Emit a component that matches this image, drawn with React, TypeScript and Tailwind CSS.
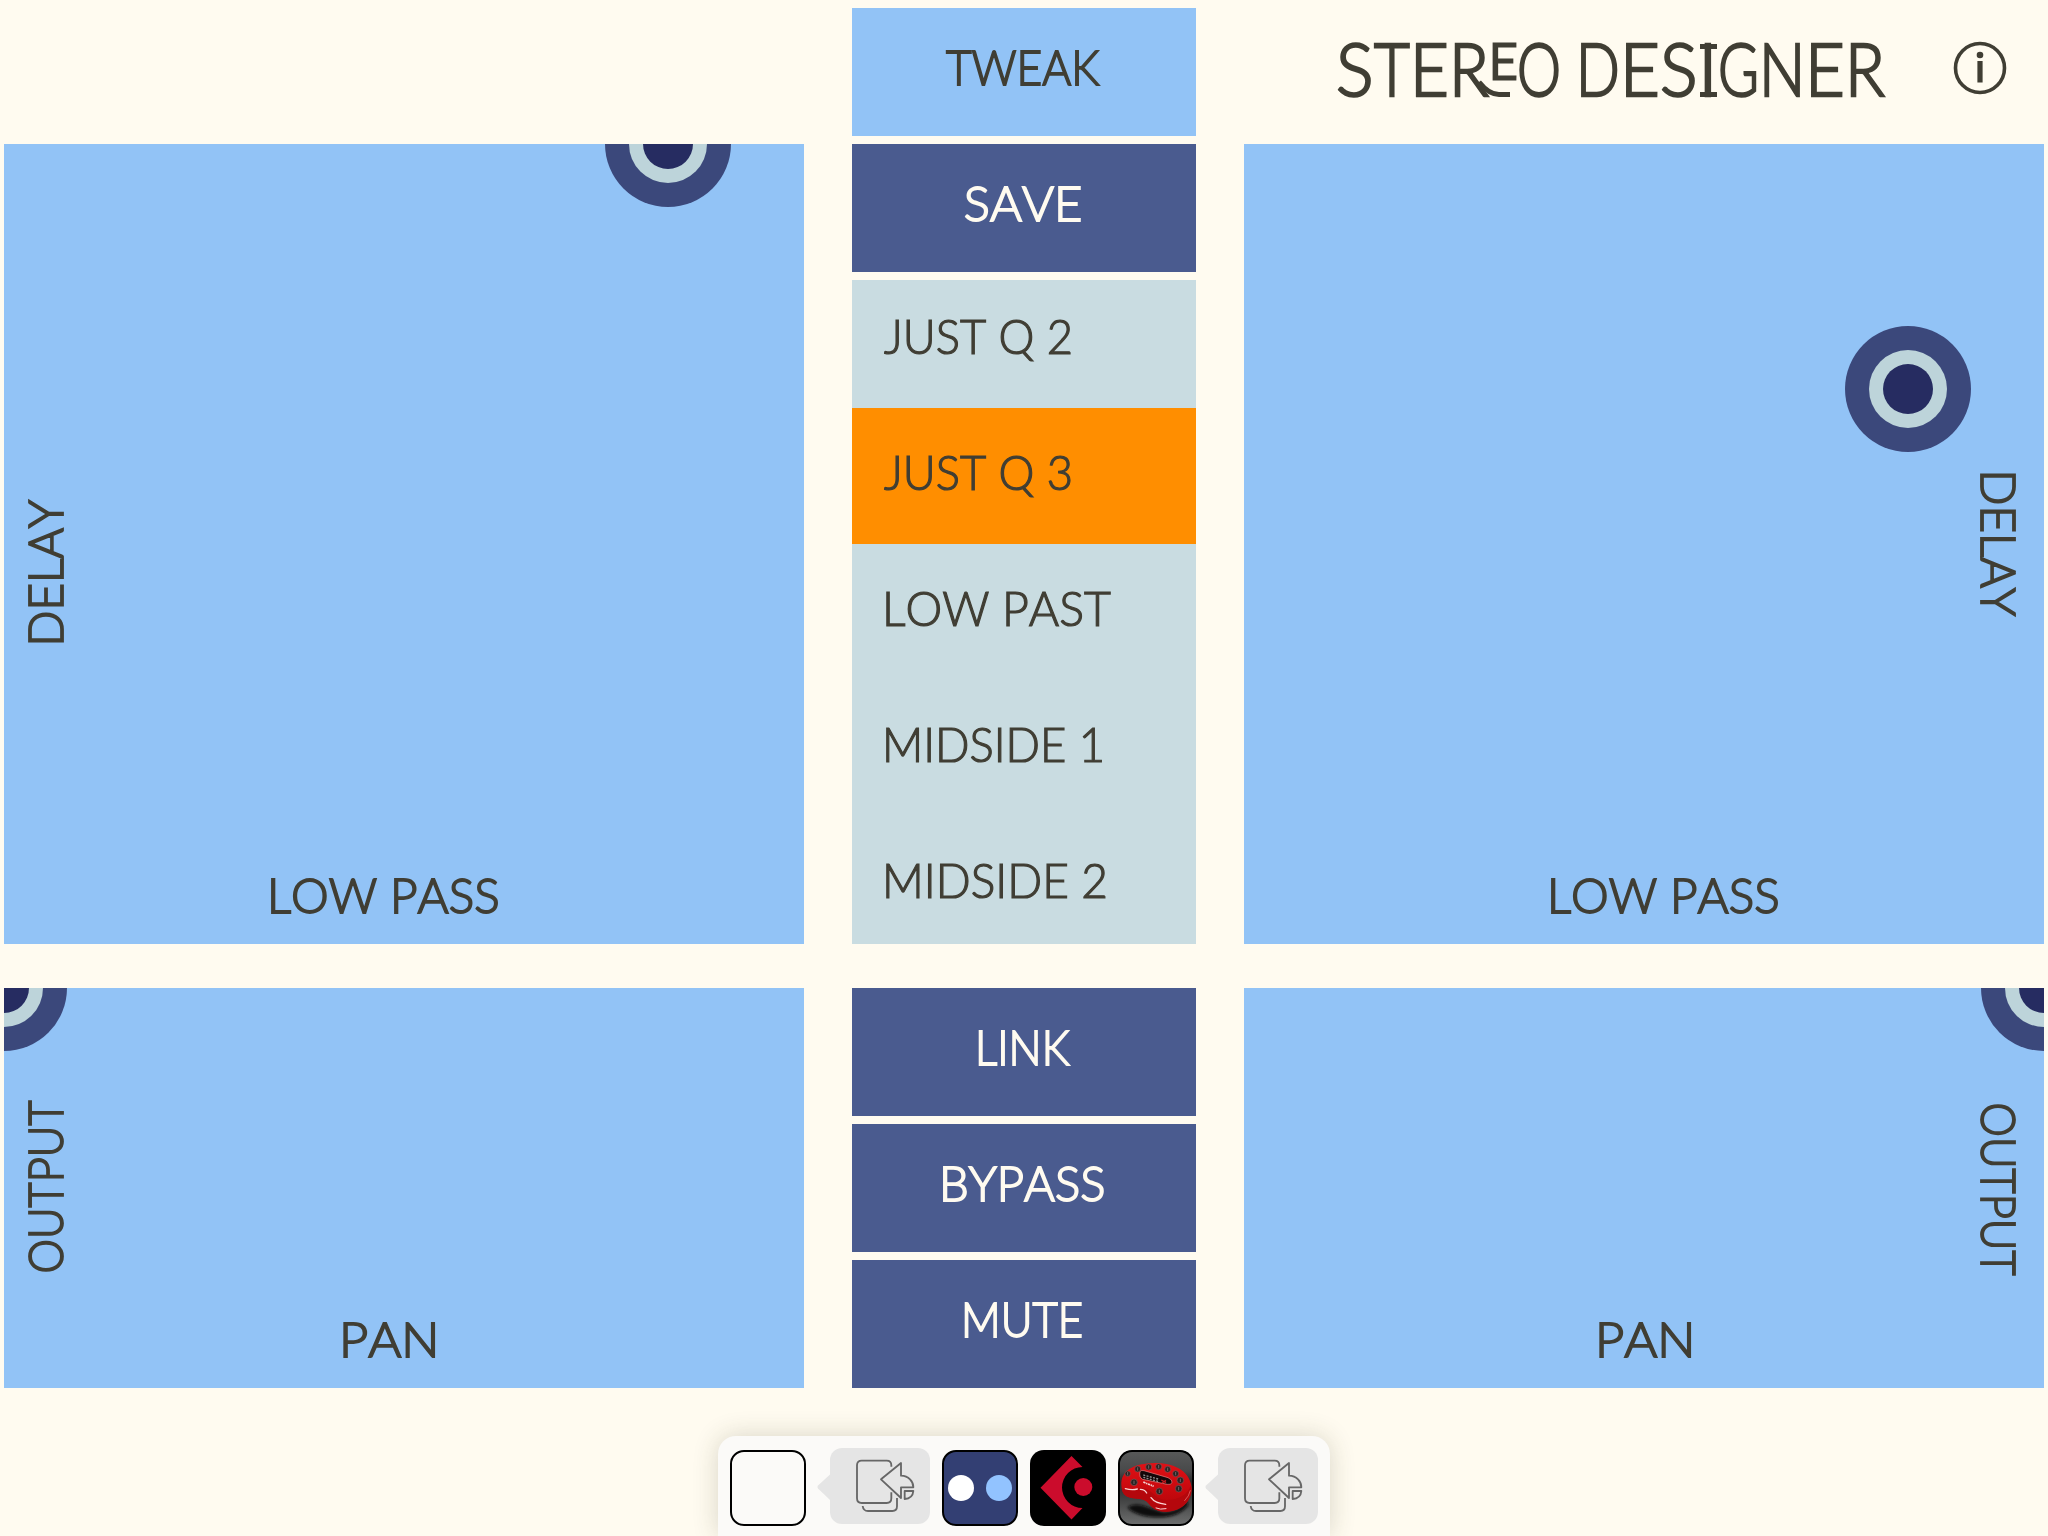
import { useLayoutEffect, useRef, useState, type ReactNode } from "react";

/** Text condensed or expanded horizontally so that it fills a given width. */
function Fit({ text, width, className = "" }: { text: string; width: number; className?: string }) {
  const ref = useRef<HTMLSpanElement>(null);
  const [scale, setScale] = useState(1);
  useLayoutEffect(() => {
    if (ref.current) setScale(width / ref.current.offsetWidth);
  }, [text, width]);
  return (
    <span className="block shrink-0 overflow-visible" style={{ width }}>
      <span className="block origin-left" style={{ transform: `scaleX(${scale})` }}>
        <span ref={ref} className={`inline-block whitespace-pre [font-kerning:none] ${className}`}>
          {text}
        </span>
      </span>
    </span>
  );
}

const labelText = "text-[48px] leading-[48px] font-light [-webkit-text-stroke:1.8px_currentColor]";
const listText = "text-[47px] leading-[48px] font-light [-webkit-text-stroke:1.2px_currentColor]";

function Button({ text, width, active = false }: { text: string; width: number; active?: boolean }) {
  return (
    <button
      className={`flex h-32 w-full items-center justify-center pr-[4px] pb-[10px] ${
        active ? "bg-[#92c3f6] text-[#403e34]" : "bg-[#4a5b8f] text-[#fffbf0]"
      }`}
    >
      <Fit text={text} width={width} className={labelText} />
    </button>
  );
}

function Knob({ className }: { className: string }) {
  return (
    <div className={`absolute flex size-[126px] items-center justify-center rounded-full bg-[#3b487b] ${className}`}>
      <div className="flex size-[78px] items-center justify-center rounded-full bg-[#bdd4da]">
        <div className="size-[50px] rounded-full bg-[#262c61]" />
      </div>
    </div>
  );
}

function Pad({ className, children }: { className: string; children: ReactNode }) {
  return <div className={`relative overflow-hidden bg-[#92c3f6] text-[#403e34] ${className}`}>{children}</div>;
}

function SideLabel({ text, width, className, turn }: { text: string; width: number; className: string; turn: string }) {
  return (
    <div className={`absolute flex w-12 items-center justify-center ${className}`}>
      <div className={`shrink-0 ${turn}`}>
        <Fit text={text} width={width} className={labelText} />
      </div>
    </div>
  );
}

const presets = [
  { name: "JUST Q 2", width: 189, row: "h-32 pl-8 pb-[16px]" },
  { name: "JUST Q 3", width: 189, row: "h-[136px] pl-8 pb-[8px] bg-[#ff8e00]" },
  { name: "LOW PAST", width: 229, row: "h-[136px] pl-[30px] pb-[8px]" },
  { name: "MIDSIDE 1", width: 223, row: "h-[136px] pl-[30px] pb-[8px]" },
  { name: "MIDSIDE 2", width: 226, row: "h-[136px] pl-[30px] pb-[8px]" },
];

const titleLetters = "text-[72px] leading-[73px] font-light [-webkit-text-stroke:2.4px_currentColor]";

function Title() {
  return (
    <h1 className="mt-px flex items-center text-[#403e34]">
      <Fit text="S" width={38} className={titleLetters} />
      <Fit text="T" width={36} className={titleLetters} />
      <Fit text="E" width={39} className={titleLetters} />
      <span className="relative">
        <Fit text="R" width={40} className={titleLetters} />
        <svg viewBox="0 0 36 20" className="absolute top-[45px] left-[26px] h-5 w-9 overflow-visible" fill="none">
          <path d="M4 5Q14 17.500 24 17.500H35" stroke="#403e34" strokeWidth="5" />
        </svg>
      </span>
      <span className="-translate-y-[8px]">
        <Fit text="E" width={28} className="text-[49px] leading-[73px] font-light [-webkit-text-stroke:3px_currentColor]" />
      </span>
      <Fit text="O" width={44} className={titleLetters} />
      <span className="ml-[15px] flex">
        <Fit text="D" width={44} className={titleLetters} />
        <Fit text="E" width={40} className={titleLetters} />
        <Fit text="S" width={38} className={titleLetters} />
        <span className="relative">
          <Fit text="I" width={20} className={titleLetters} />
          <span className="absolute top-[12px] left-[1.5px] h-[5px] w-[17px] bg-[#403e34]" />
          <span className="absolute top-[60px] left-[1.5px] h-[5px] w-[17px] bg-[#403e34]" />
        </span>
        <Fit text="G" width={41} className={titleLetters} />
        <Fit text="N" width={46} className={titleLetters} />
        <Fit text="E" width={40} className={titleLetters} />
        <Fit text="R" width={40} className={titleLetters} />
      </span>
    </h1>
  );
}

function InfoIcon() {
  return (
    <svg viewBox="0 0 54 54" className="ml-[68px] size-[54px]" fill="none">
      <circle cx="27" cy="27" r="24.5" stroke="#403e34" strokeWidth="3.6" />
      <circle cx="27" cy="14" r="3.3" fill="#403e34" />
      <rect x="24.4" y="20" width="5.2" height="21.5" fill="#403e34" />
    </svg>
  );
}

function ImportTab({ className }: { className: string }) {
  return (
    <div className={`flex ${className}`}>
      <svg viewBox="0 0 12 76" className="h-[76px] w-3 overflow-visible">
        <path d="M12 26.500L0 37.500Q-1.200 39 0 40.500L12 52Z" fill="#e5e5e5" />
      </svg>
      <div className="h-[76px] w-[100px] rounded-[12px] bg-[#e5e5e5]">
        <svg viewBox="390 84 300 228" className="size-full" fill="none" stroke="#676767" strokeWidth="5.5">
          <path d="M574 140V136Q574 122 560 122H485Q471 122 471 136V235Q471 249 485 249H560Q574 249 574 235V217" />
          <path d="M488 258Q490 273 504 273H577Q591 273 591 259V234" />
          <path d="M543 178L603 129V167C626 168 640 184 640 202H603V234Z" strokeLinejoin="round" />
          <path d="M614 213H640Q638 236 614 237Z" strokeLinejoin="round" />
        </svg>
      </div>
    </div>
  );
}

const pedalKnobs = [
  [323, 161, 8], [353, 147, 9], [386, 141, 9], [416, 140, 9], [443, 148, 9],
  [467, 161, 9], [481, 181, 10], [476, 206, 10], [418, 214, 10], [342, 187, 10],
];

function PedalIcon() {
  return (
    <svg viewBox="294 90 228 228" className="size-[76px] rounded-[14px]">
      <defs>
        <linearGradient id="wall" x1="0" y1="0" x2="0" y2="1">
          <stop offset="0" stopColor="#595a5a" />
          <stop offset="0.28" stopColor="#48494a" />
          <stop offset="0.42" stopColor="#2a2a2b" />
          <stop offset="0.62" stopColor="#3d3e3e" />
          <stop offset="1" stopColor="#707171" />
        </linearGradient>
        <linearGradient id="body" x1="0" y1="0" x2="0" y2="1">
          <stop offset="0" stopColor="#df1116" />
          <stop offset="0.55" stopColor="#c9090e" />
          <stop offset="1" stopColor="#b0060a" />
        </linearGradient>
        <filter id="soft" x="-20%" y="-20%" width="140%" height="140%">
          <feGaussianBlur stdDeviation="5" />
        </filter>
      </defs>
      <rect x="294" y="90" width="228" height="228" fill="url(#wall)" />
      <path d="M322 262Q345 245 385 262L430 276Q480 274 500 240L505 256Q480 288 430 292Q350 294 322 262Z" fill="#0b0b0b" filter="url(#soft)" />
      <path d="M304 196C302 152 340 130 405 129C470 129 512 158 515 205C516 238 490 272 440 275C408 276 396 262 384 248C372 235 352 237 334 234C314 230 305 218 304 196Z" fill="url(#body)" />
      <path d="M306 205C330 214 352 200 375 206C400 212 404 238 440 240C478 240 503 224 513 196C520 240 488 274 440 275C408 276 396 262 384 248C372 235 352 237 334 234C314 230 307 220 306 205Z" fill="#b4070c" />
      <path d="M360 154Q364 150 372 152L444 173Q458 179 456 188Q452 195 442 193L368 178Q356 172 360 154Z" fill="#130608" stroke="#eb8587" strokeWidth="2" />
      <path d="M370 165L418 178M370 172L416 185" stroke="#8c8c8c" strokeWidth="4" strokeDasharray="6 4" />
      <path d="M424 180L438 188M438 181L426 189" stroke="#c41a1f" strokeWidth="4" />
      <path d="M370 186L401 199" stroke="#f0d5d5" strokeWidth="5" strokeDasharray="7 2 4 2" />
      {pedalKnobs.map(([cx, cy, r]) => (
        <g key={`${cx}-${cy}`}>
          <circle cx={cx} cy={cy} r={r} fill="#2c2222" stroke="#865355" strokeWidth="2" />
          <path d={`M${cx} ${cy - 5}V${cy + 5}`} stroke="#8f8b8b" strokeWidth="2" />
        </g>
      ))}
      <g stroke="#fbd3d3" strokeLinecap="round" fill="none" strokeWidth="4">
        <path d="M316 206Q336 211 352 207" />
        <path d="M361 208Q374 208 380 219" />
        <path d="M393 233Q405 250 437 253" />
        <path d="M408 264Q420 270 438 266" strokeWidth="3" />
        <path d="M494 242Q508 228 511 212" strokeWidth="2" stroke="#ee7a7c" />
      </g>
      <rect x="297" y="93" width="222" height="222" rx="39" fill="none" stroke="#000" strokeWidth="6" />
    </svg>
  );
}

function Dock() {
  return (
    <div className="mx-auto mt-12 flex h-[100px] w-[612px] rounded-t-[18px] bg-[#fbfaf8] pt-[14px] pl-3 shadow-[0_0_26px_rgba(60,60,30,0.2)]">
      <div className="size-[76px] rounded-[14px] border-2 border-black" />
      <ImportTab className="-mt-0.5 ml-3" />
      <div className="ml-3 flex size-[76px] items-center justify-center gap-3 rounded-[14px] border-2 border-black bg-[#333f73]">
        <div className="size-[26px] rounded-full bg-white" />
        <div className="size-[26px] rounded-full bg-[#92c3ff]" />
      </div>
      <svg viewBox="0 0 76 76" className="ml-3 size-[76px]">
        <rect width="76" height="76" rx="14" fill="#000" />
        <path d="M41.500 6L52.500 17A20.500 20.500 0 0 0 52.500 58L41.500 69.500L10.500 37.700Z" fill="#cb0c2c" />
        <circle cx="53.300" cy="37" r="9" fill="#cb0c2c" />
      </svg>
      <div className="ml-3">
        <PedalIcon />
      </div>
      <ImportTab className="-mt-0.5 ml-3" />
    </div>
  );
}

export default function App() {
  return (
    <div className="h-[1536px] w-[2048px] overflow-hidden bg-[#fffbf0] px-1 font-['Lato','Liberation_Sans',sans-serif]">
      <div className="flex h-[1388px] justify-between">
        <div className="flex w-[800px] flex-col gap-11 pt-36">
          <Pad className="h-[800px]">
            <Knob className="-top-[63px] left-[601px]" />
            <SideLabel text="DELAY" width={147} className="top-[355px] left-4 h-[148px]" turn="-rotate-90" />
            <div className="absolute bottom-[25px] left-[263px]">
              <Fit text="LOW PASS" width={233} className={labelText} />
            </div>
          </Pad>
          <Pad className="h-[400px]">
            <Knob className="-top-[63px] -left-[63px]" />
            <SideLabel text="OUTPUT" width={173} className="top-[112px] left-4 h-[173px]" turn="-rotate-90" />
            <div className="absolute bottom-[25px] left-[335px]">
              <Fit text="PAN" width={100} className={labelText} />
            </div>
          </Pad>
        </div>

        <div className="flex w-[344px] flex-col gap-2 pt-2">
          <Button text="TWEAK" width={153} active />
          <Button text="SAVE" width={118} />
          <div className="flex h-[664px] flex-col overflow-hidden bg-[#c9dce1] text-[#403e34]">
            {presets.map((p) => (
              <div key={p.name} className={`flex shrink-0 items-center ${p.row}`}>
                <Fit text={p.name} width={p.width} className={listText} />
              </div>
            ))}
          </div>
          <div className="mt-9 flex flex-col gap-2">
            <Button text="LINK" width={95} />
            <Button text="BYPASS" width={166} />
            <Button text="MUTE" width={122} />
          </div>
        </div>

        <div className="flex w-[800px] flex-col">
          <div className="flex h-36 items-center pb-[9px] pl-[92px]">
            <Title />
            <InfoIcon />
          </div>
          <Pad className="h-[800px]">
            <Knob className="top-[182px] left-[601px]" />
            <SideLabel text="DELAY" width={147} className="top-[325px] left-[730px] h-[148px]" turn="rotate-90" />
            <div className="absolute bottom-[25px] left-[303px]">
              <Fit text="LOW PASS" width={233} className={labelText} />
            </div>
          </Pad>
          <Pad className="mt-11 h-[400px]">
            <Knob className="-top-[63px] left-[737px]" />
            <SideLabel text="OUTPUT" width={173} className="top-[114px] left-[730px] h-[173px]" turn="rotate-90" />
            <div className="absolute bottom-[25px] left-[351px]">
              <Fit text="PAN" width={100} className={labelText} />
            </div>
          </Pad>
        </div>
      </div>
      <Dock />
    </div>
  );
}
